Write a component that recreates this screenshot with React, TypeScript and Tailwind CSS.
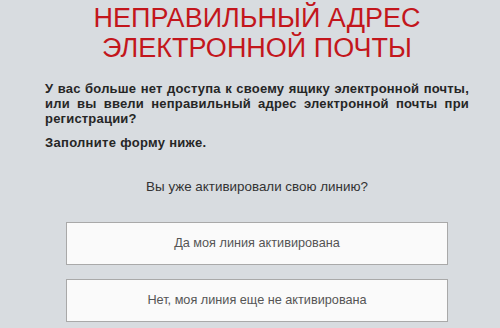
import React from "react";

export default function App() {
  return (
    <div
      className="w-[500px] h-[328px] overflow-hidden bg-[#d8dce0]"
      style={{ fontFamily: '"Liberation Sans", Arial, sans-serif' }}
    >
      <div className="ml-[45px] w-[424px] pt-[3px]">
        <h1 className="text-center text-[27px] leading-[30px] text-[#c3161c] font-normal">
          НЕПРАВИЛЬНЫЙ АДРЕС
          <br />
          ЭЛЕКТРОННОЙ ПОЧТЫ
        </h1>
        <p className="mt-[18px] text-[13px] leading-[15px] font-bold text-[#262626] tracking-[0.2px]">
          <span className="block text-justify [text-align-last:justify]">
            У вас больше нет доступа к своему ящику электронной почты,
          </span>
          <span className="block text-justify [text-align-last:justify]">
            или вы ввели неправильный адрес электронной почты при
          </span>
          <span className="block">регистрации?</span>
        </p>
        <p className="mt-[9px] text-[13px] leading-[15px] font-bold text-[#262626] tracking-[0.3px]">
          Заполните форму ниже.
        </p>
        <p className="mt-[29px] text-center text-[13.4px] leading-[16px] text-[#333]">
          Вы уже активировали свою линию?
        </p>
        <div className="mt-[27px] px-[21px] flex flex-col gap-[14px]">
          <button className="h-[43px] w-full bg-[#fafafa] border border-[#a9a9a9] text-[12.7px] text-[#555] flex items-center justify-center">
            Да моя линия активирована
          </button>
          <button className="h-[43px] w-full bg-[#fafafa] border border-[#a9a9a9] text-[12.7px] text-[#555] flex items-center justify-center">
            Нет, моя линия еще не активирована
          </button>
        </div>
      </div>
    </div>
  );
}
